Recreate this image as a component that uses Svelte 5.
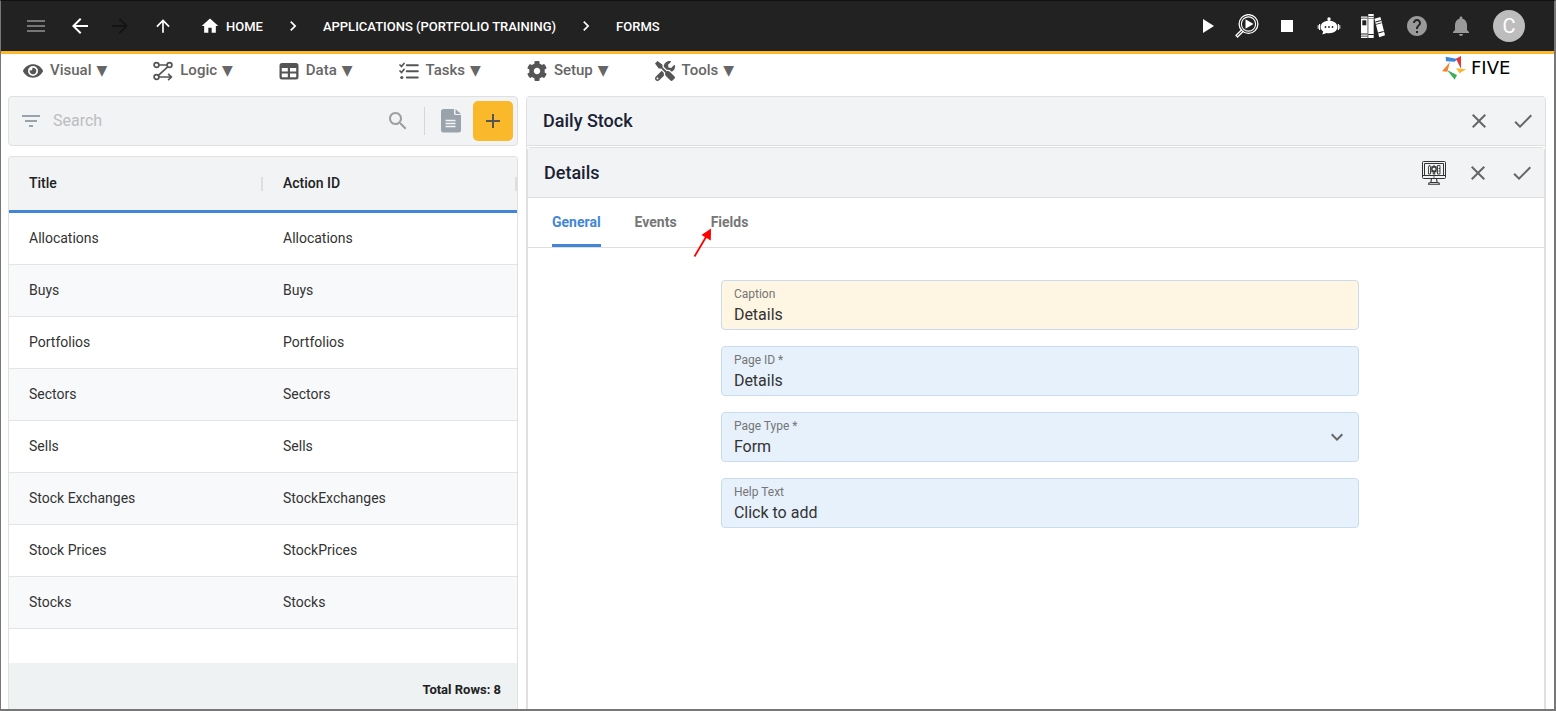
<script>
  const menus = [
    { label: 'Visual', icon: 'eye' },
    { label: 'Logic', icon: 'logic' },
    { label: 'Data', icon: 'data' },
    { label: 'Tasks', icon: 'tasks' },
    { label: 'Setup', icon: 'gear' },
    { label: 'Tools', icon: 'tools' }
  ];

  const rows = [
    ['Allocations', 'Allocations'],
    ['Buys', 'Buys'],
    ['Portfolios', 'Portfolios'],
    ['Sectors', 'Sectors'],
    ['Sells', 'Sells'],
    ['Stock Exchanges', 'StockExchanges'],
    ['Stock Prices', 'StockPrices'],
    ['Stocks', 'Stocks']
  ];

  const tabs = ['General', 'Events', 'Fields'];
  let activeTab = $state('General');
  let search = $state('');
  let caption = $state('Details');
  let pageId = $state('Details');
  let pageType = $state('Form');
  let helpText = $state('Click to add');

  const paths = {
    menu: 'M3 18h18v-2H3v2zm0-5h18v-2H3v2zm0-7v2h18V6H3z',
    back: 'M20 11H7.83l5.59-5.59L12 4l-8 8 8 8 1.41-1.41L7.83 13H20v-2z',
    forward: 'M12 4l-1.41 1.41L16.17 11H4v2h12.17l-5.58 5.59L12 20l8-8z',
    up: 'M4 12l1.41 1.41L11 7.83V20h2V7.83l5.58 5.59L20 12l-8-8-8 8z',
    home: 'M10 20v-6h4v6h5v-8h3L12 3 2 12h3v8z',
    chevron: 'M10 6L8.59 7.41 13.17 12l-4.58 4.59L10 18l6-6z',
    play: 'M8 5v14l11-7z',
    stop: 'M6 6h12v12H6z',
    help: 'M12 2C6.48 2 2 6.48 2 12s4.48 10 10 10 10-4.48 10-10S17.52 2 12 2zm1 17h-2v-2h2v2zm2.07-7.75l-.9.92C13.45 12.9 13 13.5 13 15h-2v-.5c0-1.1.45-2.1 1.17-2.83l1.24-1.26c.37-.36.59-.86.59-1.41 0-1.1-.9-2-2-2s-2 .9-2 2H8c0-2.21 1.79-4 4-4s4 1.79 4 4c0 .88-.36 1.68-.93 2.25z',
    bell: 'M12 22c1.1 0 2-.9 2-2h-4c0 1.1.89 2 2 2zm6-6v-5c0-3.07-1.64-5.64-4.5-6.32V4c0-.83-.67-1.5-1.5-1.5s-1.5.67-1.5 1.5v.68C7.63 5.36 6 7.92 6 11v5l-2 2v1h16v-1l-2-2z',
    filter: 'M10 18h4v-2h-4v2zM3 6v2h18V6H3zm3 7h12v-2H6v2z',
    search: 'M15.5 14h-.79l-.28-.27C15.41 12.59 16 11.11 16 9.5 16 5.91 13.09 3 9.5 3S3 5.91 3 9.5 5.91 16 9.5 16c1.61 0 3.09-.59 4.23-1.57l.27.28v.79l5 4.99L20.49 19l-4.99-5zm-6 0C7.01 14 5 11.99 5 9.5S7.01 5 9.5 5 14 7.01 14 9.5 11.99 14 9.5 14z',
    add: 'M19 13h-6v6h-2v-6H5v-2h6V5h2v6h6v2z',
    close: 'M19 6.41L17.59 5 12 10.59 6.41 5 5 6.41 10.59 12 5 17.59 6.41 19 12 13.41 17.59 19 19 17.59 13.41 12z',
    check: 'M9 16.17L4.83 12l-1.42 1.41L9 19 21 7l-1.41-1.41z',
    expand: 'M16.59 8.59L12 13.17 7.41 8.59 6 10l6 6 6-6z'
  };
</script>

{#snippet icon(name, size = 24)}
  <svg width={size} height={size} viewBox="0 0 24 24" fill="currentColor" aria-hidden="true"><path d={paths[name]} /></svg>
{/snippet}

{#snippet menuIcon(name)}
  {#if name === 'eye'}
    <svg width="20" height="20" viewBox="0 0 576 512" preserveAspectRatio="xMidYMid meet" fill="currentColor" aria-hidden="true"><path d="M572.52 241.4C518.29 135.59 410.93 64 288 64S57.68 135.64 3.48 241.41a32.35 32.35 0 0 0 0 29.19C57.71 376.41 165.07 448 288 448s230.32-71.64 284.52-177.41a32.35 32.35 0 0 0 0-29.19zM288 400a144 144 0 1 1 144-144 143.93 143.93 0 0 1-144 144zm0-240a95.31 95.31 0 0 0-25.31 3.79 47.85 47.85 0 0 1-66.9 66.9A95.78 95.78 0 1 0 288 160z" /></svg>
  {:else if name === 'logic'}
    <svg width="20" height="20" viewBox="0 0 20 20" fill="none" stroke="currentColor" stroke-width="1.7" stroke-linecap="round" stroke-linejoin="round" aria-hidden="true">
      <circle cx="3.500" cy="4" r="2.400" /><circle cx="16.500" cy="4" r="2.400" /><circle cx="3.500" cy="16" r="2.400" />
      <path d="M5.900 4H14M14.700 5.800L5.400 14.300M5.900 16h12.300M15.600 13.300l2.900 2.700-2.900 2.700" />
    </svg>
  {:else if name === 'data'}
    <svg width="20" height="20" viewBox="0 0 20 20" fill="currentColor" fill-rule="evenodd" aria-hidden="true"><path d="M3 2h14a2.5 2.5 0 0 1 2.5 2.5V16a2.5 2.5 0 0 1-2.5 2.5H3A2.5 2.5 0 0 1 .5 16V4.5A2.5 2.5 0 0 1 3 2zM2.8 7v3.500h6V7zM11 7v3.500h6.200V7zM2.800 12.600V16.200h6v-3.600zM11 12.600v3.600h6.200v-3.600z" /></svg>
  {:else if name === 'tasks'}
    <svg width="20" height="20" viewBox="0 0 20 20" fill="none" stroke="currentColor" aria-hidden="true">
      <path stroke-width="2" stroke-linecap="round" d="M7.800 4.300h11M7.800 10.300h11M7.800 16.500h11" />
      <path stroke-width="1.700" stroke-linecap="round" d="M1 4l1.500 1.500L5 2.500M1 10l1.500 1.500L5 8.500" />
      <circle cx="2.800" cy="16.500" r="1.600" fill="currentColor" stroke="none" />
    </svg>
  {:else if name === 'gear'}
    <svg width="20" height="20" viewBox="8 8 496 496" fill="currentColor" aria-hidden="true"><path d="M487.4 315.7l-42.6-24.6c4.3-23.2 4.3-47 0-70.2l42.6-24.6c4.9-2.8 7.1-8.6 5.5-14-11.1-35.6-30-67.8-54.7-94.6-3.8-4.1-10-5.1-14.8-2.3L380.8 110c-17.9-15.4-38.5-27.3-60.8-35.1V25.8c0-5.6-3.9-10.5-9.4-11.7-36.7-8.2-74.3-7.8-109.2 0-5.5 1.2-9.4 6.1-9.4 11.7V75c-22.2 7.9-42.8 19.8-60.8 35.1L88.7 85.5c-4.9-2.8-11-1.9-14.8 2.3-24.7 26.7-43.6 58.9-54.7 94.6-1.7 5.4.6 11.2 5.5 14L67.3 221c-4.3 23.2-4.3 47 0 70.2l-42.6 24.6c-4.9 2.8-7.1 8.6-5.5 14 11.1 35.6 30 67.8 54.7 94.6 3.8 4.1 10 5.1 14.8 2.3l42.6-24.6c17.9 15.4 38.5 27.3 60.8 35.1v49.2c0 5.6 3.9 10.5 9.4 11.7 36.7 8.2 74.3 7.8 109.2 0 5.5-1.2 9.4-6.1 9.4-11.7v-49.2c22.2-7.9 42.8-19.8 60.8-35.1l42.6 24.6c4.9 2.8 11 1.9 14.8-2.3 24.7-26.7 43.6-58.9 54.7-94.6 1.5-5.5-.7-11.3-5.6-14.1zM256 336c-44.1 0-80-35.9-80-80s35.9-80 80-80 80 35.9 80 80-35.9 80-80 80z" /></svg>
  {:else}
    <svg width="20" height="20" viewBox="0 0 512 512" fill="currentColor" aria-hidden="true"><path d="M501.1 395.7L384 278.6c-23.1-23.1-57.6-27.6-85.4-13.9L192 158.1V96L64 0 0 64l96 128h62.1l106.6 106.6c-13.6 27.8-9.2 62.3 13.9 85.4l117.1 117.1c14.6 14.6 38.2 14.6 52.7 0l52.7-52.7c14.5-14.6 14.5-38.2 0-52.7zM331.7 225c28.3 0 54.9 11 74.9 31l19.4 19.4c15.8-6.9 30.8-16.5 43.8-29.5 37.1-37.1 49.7-89.3 37.9-136.7-2.2-9-13.5-12.1-20.1-5.5l-74.4 74.4-67.9-11.3L334 98.9l74.4-74.4c6.6-6.6 3.4-17.9-5.7-20.2-47.4-11.7-99.6.9-136.6 37.9-28.5 28.5-41.9 66.1-41.2 103.6l82.1 82.1c8.1-1.9 16.5-2.9 24.7-2.9zm-103.9 82l-56.7-56.7L18.7 402.8c-25 25-25 65.5 0 90.5s65.5 25 90.5 0l123.6-123.6c-7.6-19.9-9.9-41.6-5-62.7zM64 472c-13.2 0-24-10.8-24-24 0-13.3 10.7-24 24-24s24 10.7 24 24c0 13.2-10.7 24-24 24z" /></svg>
  {/if}
{/snippet}

<div class="app">
  <header class="topbar">
    <button class="icon-btn dim" aria-label="Menu">{@render icon('menu')}</button>
    <button class="icon-btn back" aria-label="Back">{@render icon('back')}</button>
    <button class="icon-btn forward" aria-label="Forward" disabled>{@render icon('forward')}</button>
    <button class="icon-btn up" aria-label="Up">{@render icon('up', 20)}</button>
    <nav class="crumbs" aria-label="Breadcrumb">
      <a class="home" href="#home">{@render icon('home', 20)}<span>HOME</span></a>
      {@render icon('chevron', 20)}
      <a href="#applications"><span>APPLICATIONS (PORTFOLIO TRAINING)</span></a>
      {@render icon('chevron', 20)}
      <a href="#forms"><span>FORMS</span></a>
    </nav>
    <div class="actions">
      <button class="icon-btn" aria-label="Run">{@render icon('play')}</button>
      <button class="icon-btn" aria-label="Inspect">
        <svg width="24" height="24" viewBox="0 0 24 24" fill="none" stroke="currentColor" aria-hidden="true">
          <circle cx="13.500" cy="10" r="9.400" stroke-width="1.300" />
          <circle cx="13.500" cy="10" r="7.100" stroke-width="1.100" />
          <path d="M10.500 5.300v9.400l8-4.700z" fill="currentColor" stroke="none" />
          <path d="M7 15.500L1 21.300l1.500 1.700L8.600 17" stroke-width="1.300" />
        </svg>
      </button>
      <button class="icon-btn" aria-label="Stop">{@render icon('stop')}</button>
      <button class="icon-btn robot" aria-label="Assistant">
        <svg width="24" height="24" viewBox="0 0 24 24" aria-hidden="true">
          <circle cx="12" cy="5" r="1.700" fill="currentColor" />
          <path d="M12 5v3" stroke="currentColor" stroke-width="1.400" />
          <path d="M12 6.800c5 0 8.300 2.400 8.300 6.200S17 19.200 12 19.200c-.8 0-1.500 0-2.200-.2L5.300 20.600l.9-3.100C4.500 16.400 3.700 14.900 3.700 13c0-3.800 3.300-6.200 8.300-6.200z" fill="currentColor" />
          <path d="M2.600 10v6M21.400 10v6" stroke="currentColor" stroke-width="1.200" />
          <path d="M1.200 11.200v3.600M22.800 11.200v3.600" stroke="currentColor" stroke-width="1" />
          <g fill="#222"><circle cx="8.500" cy="13" r=".9" /><circle cx="12" cy="13" r=".9" /><circle cx="15.500" cy="13" r=".9" /></g>
        </svg>
      </button>
      <button class="icon-btn wide" aria-label="Library">
        <svg width="24" height="24" viewBox="0 0 24 24" fill="currentColor" aria-hidden="true">
          <path d="M0 2.500h6.600V24H0z" />
          <path d="M7.300 0h5.400v24H7.300z" />
          <path d="M13.400 4.700l6-1.700L24 21.300l-5.800 1.900z" />
          <g fill="#222"><path d="M1.300 6.300h4v5h-4z" /><path d="M0 19.500h6.600v.9H0zM0 21.700h6.600v.7H0zM0 3.700h6.600v.7H0z" /><path d="M7.300 2h5.400v.8H7.300zM7.300 4h5.400v.6H7.300zM7.300 20h5.400v.9H7.300z" /><path d="M14.300 7.600l5.500-1.500.3 1-5.500 1.500zM14.900 9.900l5.500-1.500.2.800-5.500 1.500zM17 18.400l5.500-1.500.3 1-5.500 1.500z" /></g>
        </svg>
      </button>
      <button class="icon-btn wide grey" aria-label="Help">{@render icon('help')}</button>
      <button class="icon-btn wide grey" aria-label="Notifications">{@render icon('bell')}</button>
      <button class="avatar wide" aria-label="Account">C</button>
    </div>
  </header>

  <nav class="menubar" aria-label="Main">
    {#each menus as m}
      <button class="menu">{@render menuIcon(m.icon)}<span>{m.label}</span><span class="tri">▼</span></button>
    {/each}
    <div class="brand">
      <svg width="24" height="24" viewBox="0 0 72 72" aria-hidden="true">
        <path d="M11 2l36 7-9 8-26-1z" fill="#3f86dd" />
        <path d="M57 0v38L42 8z" fill="#e5343a" />
        <path d="M42 37l30 3-19 12z" fill="#fbb829" />
        <path d="M15 42l30 15-7 14z" fill="#3fae5a" />
        <path d="M24 18l-8 29-16-1z" fill="#f5822f" />
      </svg>
      <span>FIVE</span>
    </div>
  </nav>

  <main>
    <section class="left">
      <div class="searchbar">
        <span class="slate">{@render icon('filter')}</span>
        <input type="search" placeholder="Search" aria-label="Search" bind:value={search} />
        <button class="icon-btn find" aria-label="Find">{@render icon('search')}</button>
        <span class="divider"></span>
        <button class="icon-btn slate doc" aria-label="Report">
          <svg width="24" height="24" viewBox="0 0 24 24" aria-hidden="true">
            <path d="M4.500 0H15v4.500A1.500 1.500 0 0 0 16.500 6H22v15a2.500 2.500 0 0 1-2.500 2.500h-15A2.500 2.500 0 0 1 2 21V2.500A2.500 2.500 0 0 1 4.500 0z" fill="currentColor" />
            <path d="M16.500 0L22 5h-5.500z" fill="currentColor" />
            <path d="M6.500 11.500h10M6.500 14.500h10M6.500 17.500h10" stroke="#f1f3f5" stroke-width="1.300" />
          </svg>
        </button>
        <button class="add" aria-label="Add">{@render icon('add')}</button>
      </div>
      <div class="grid">
        <table>
          <thead>
            <tr><th>Title</th><th>Action ID</th></tr>
          </thead>
          <tbody>
            {#each rows as [title, action]}
              <tr><td>{title}</td><td>{action}</td></tr>
            {/each}
          </tbody>
        </table>
        <div class="total">Total Rows: 8</div>
      </div>
    </section>

    <section class="outer">
      <div class="head">
        <h1>Daily Stock</h1>
        <button class="icon-btn" aria-label="Cancel form">{@render icon('close')}</button>
        <button class="icon-btn" aria-label="Save form">{@render icon('check')}</button>
      </div>
      <div class="inner">
        <div class="head">
          <h2>Details</h2>
          <button class="icon-btn screen" aria-label="Preview">
            <svg width="24" height="24" viewBox="0 0 24 24" fill="none" stroke="currentColor" aria-hidden="true">
              <rect x=".5" y=".5" width="23" height="17" rx="1" stroke-width="1" />
              <path d="M.5 14.500h23M2.500 14V2.500h19V14" stroke-width="1" />
              <path d="M9.500 17.800L8.800 21.500M14.500 17.800l.7 3.700M6.500 23.300c0-1.300.8-1.800 2-1.800h7c1.200 0 2 .5 2 1.800z" stroke-width="1.100" />
              <path d="M6.500 13V6l1-2 1 2v7zM15.500 4.500h2.500v8.500h-2.500zM16.500 7.500H18M16.500 10H18" stroke-width=".9" />
              <circle cx="12" cy="8" r="2.200" stroke-width="1.400" />
              <path d="M12 4v2M11.300 10.500v3M12.700 10.500v3M9.500 5.500l1 1M14.500 5.500l-1 1M9.500 11l1-1M14.500 11l-1-1M11.300 16h1.400" stroke-width="1.100" />
            </svg>
          </button>
          <button class="icon-btn" aria-label="Cancel details">{@render icon('close')}</button>
          <button class="icon-btn" aria-label="Save details">{@render icon('check')}</button>
        </div>
        <div class="tabs" role="tablist">
          {#each tabs as t}
            <button role="tab" aria-selected={activeTab === t} class:active={activeTab === t} onclick={() => (activeTab = t)}>
              {t}
              {#if t === 'Fields'}
                <svg class="pointer" width="20" height="30" viewBox="0 0 20 30" aria-hidden="true">
                  <path d="M1.500 28.500L13 9" stroke="#f00" stroke-width="1.800" />
                  <path d="M18 .5l-.2 12L8.500 7z" fill="#f00" />
                </svg>
              {/if}
            </button>
          {/each}
        </div>
        <form>
          <div class="field warm">
            <label for="caption">Caption</label>
            <input id="caption" bind:value={caption} />
          </div>
          <div class="field">
            <label for="pageid">Page ID *</label>
            <input id="pageid" bind:value={pageId} />
          </div>
          <div class="field">
            <label for="pagetype">Page Type *</label>
            <select id="pagetype" bind:value={pageType}><option>Form</option></select>
            <span class="caret">{@render icon('expand')}</span>
          </div>
          <div class="field">
            <label for="helptext">Help Text</label>
            <input id="helptext" bind:value={helpText} />
          </div>
        </form>
      </div>
    </section>
  </main>
</div>

<style>
  :global(body) { margin: 0; background: #fff; }
  * { box-sizing: border-box; }
  svg { display: block; flex: none; }
  button, input, select { font: inherit; color: inherit; border: 0; padding: 0; margin: 0; background: none; }
  button { cursor: pointer; }
  a { color: inherit; text-decoration: none; }

  .app {
    display: flex;
    flex-direction: column;
    height: 100vh;
    overflow: hidden;
    border: 1px solid #777;
    border-top-color: #111;
    border-right-width: 2px;
    border-bottom-width: 2px;
    font: 14px/20px Roboto, "Liberation Sans", sans-serif;
    color: #333;
  }
  .icon-btn { display: flex; align-items: center; justify-content: center; flex: none; }

  .topbar {
    display: flex;
    align-items: center;
    flex: none;
    height: 53px;
    padding: 0 29px 0 23px;
    background: #222;
    border-bottom: 3px solid #f9b92b;
    color: #fff;
  }
  .dim { color: #777; }
  .back { margin-left: 20px; }
  .forward { margin-left: 16px; color: #141414; }
  .up { margin-left: 21px; }
  .crumbs { display: flex; align-items: center; gap: 20px; margin-left: 27px; font-size: 13px; font-weight: 500; }
  .crumbs span { padding-top: 2px; }
  .crumbs a { display: flex; align-items: center; gap: 6px; }
  .actions { display: flex; align-items: center; gap: 16px; margin-left: auto; }
  .robot { margin-left: 2px; }
  .wide { margin-left: 4px; }
  .grey { color: #999; }
  .avatar { width: 32px; height: 32px; border-radius: 50%; background: #bdbdbd; color: #fff; font-size: 20px; }

  .menubar { display: flex; align-items: center; gap: 46px; flex: none; height: 32px; padding: 0 25px 0 22px; color: #666; }
  .menu { display: flex; align-items: center; gap: 7px; font-size: 15px; font-weight: 500; }
  .menu svg { margin-top: 1px; color: #555; }
  .tri { margin-left: -2px; font: 14px/20px "DejaVu Sans", sans-serif; }
  .brand { display: flex; align-items: center; gap: 5px; margin: -4px 0 0 auto; color: #000; font: 18px/24px "DejaVu Sans", sans-serif; }
  .brand span { width: 58px; }

  main { display: grid; grid-template-columns: 1fr 2fr; gap: 8px; flex: 1; min-height: 0; padding: 10px 8px 0 7px; }
  .left { display: flex; flex-direction: column; gap: 10px; min-width: 0; min-height: 0; }

  .searchbar {
    display: flex;
    align-items: center;
    height: 50px;
    flex: none;
    padding: 0 4px 0 10px;
    background: #f1f3f5;
    border: 1px solid #e0e0e0;
    border-radius: 4px;
  }
  .slate { color: #9aa3ab; }
  .searchbar input { flex: 1; min-width: 0; margin-left: 10px; font-size: 16px; outline: 0; appearance: none; }
  .searchbar input::placeholder { color: #bdbdbd; opacity: 1; }
  .find { color: #9e9e9e; }
  .divider { width: 1px; height: 28px; margin: 0 14px; background: #d5d7d9; }
  .add { display: flex; align-items: center; justify-content: center; width: 40px; height: 40px; margin-left: 10px; border-radius: 5px; background: #f9b92b; color: #555; }

  .grid { display: flex; flex-direction: column; flex: 1; min-height: 0; border: 1px solid #e0e0e0; border-bottom: 0; border-radius: 4px 4px 0 0; overflow: hidden; }
  table { width: 100%; table-layout: fixed; border-collapse: separate; border-spacing: 0; }
  th, td { padding: 0 20px 2px; text-align: left; }
  th { position: relative; height: 56px; background: #f1f3f5; border-bottom: 3px solid #4285d9; font-weight: 500; color: #212121; }
  th::after { content: ""; position: absolute; top: 20px; right: 0; width: 2px; height: 14px; background: #dcdee0; }
  td { height: 52px; border-bottom: 1px solid #e4e5e6; }
  tbody tr:nth-child(even) { background: #f8f9fb; }
  .total { height: 46px; margin-top: auto; padding: 18px 16px 0; background: #eef2f3; font-size: 13px; line-height: 18px; font-weight: 700; text-align: right; color: #212121; }

  .outer { display: flex; flex-direction: column; min-width: 0; min-height: 0; border: 1px solid #e0e0e0; border-bottom: 0; border-radius: 4px 4px 0 0; }
  .inner { flex: 1; min-height: 0; margin-top: 1px; border: 1px solid #e0e0e0; border-bottom: 0; border-radius: 4px 4px 0 0; }
  .head { display: flex; align-items: center; gap: 20px; height: 49px; padding: 0 10px 0 16px; background: #f1f3f5; border-bottom: 1px solid #dcdee0; color: #666; }
  .inner .head { height: 50px; }
  h1, h2 { flex: 1; margin: 0; font-size: 18px; line-height: 24px; font-weight: 500; color: #1a2233; }
  .screen { color: #333; }

  .tabs { display: flex; gap: 34px; height: 50px; padding: 0 24px; border-bottom: 1px solid #dcdee0; font-weight: 700; color: #777; }
  .tabs button { position: relative; height: 49px; padding-top: 2px; border-bottom: 3px solid transparent; }
  .tabs .active { color: #4285d9; border-color: #4285d9; border-radius: 2px 2px 0 0; }
  .pointer { position: absolute; left: -18px; top: 30px; }

  form { display: flex; flex-direction: column; gap: 16px; width: 64%; margin: 32px auto 0; padding: 0 2px 0 10px; }
  .field { position: relative; display: flex; flex-direction: column; height: 50px; padding: 6px 12px 0; background: #e7f1fc; border: 1px solid #c9dcec; border-radius: 4px; }
  .warm { background: #fff5e3; }
  label { font-size: 12px; line-height: 14px; color: #757575; }
  .field input, .field select { width: 100%; height: 26px; font-size: 16px; color: #333; outline: 0; appearance: none; }
  .field select { height: 28px; }
  .caret { position: absolute; right: 9px; top: 12px; color: #666; pointer-events: none; }
</style>
